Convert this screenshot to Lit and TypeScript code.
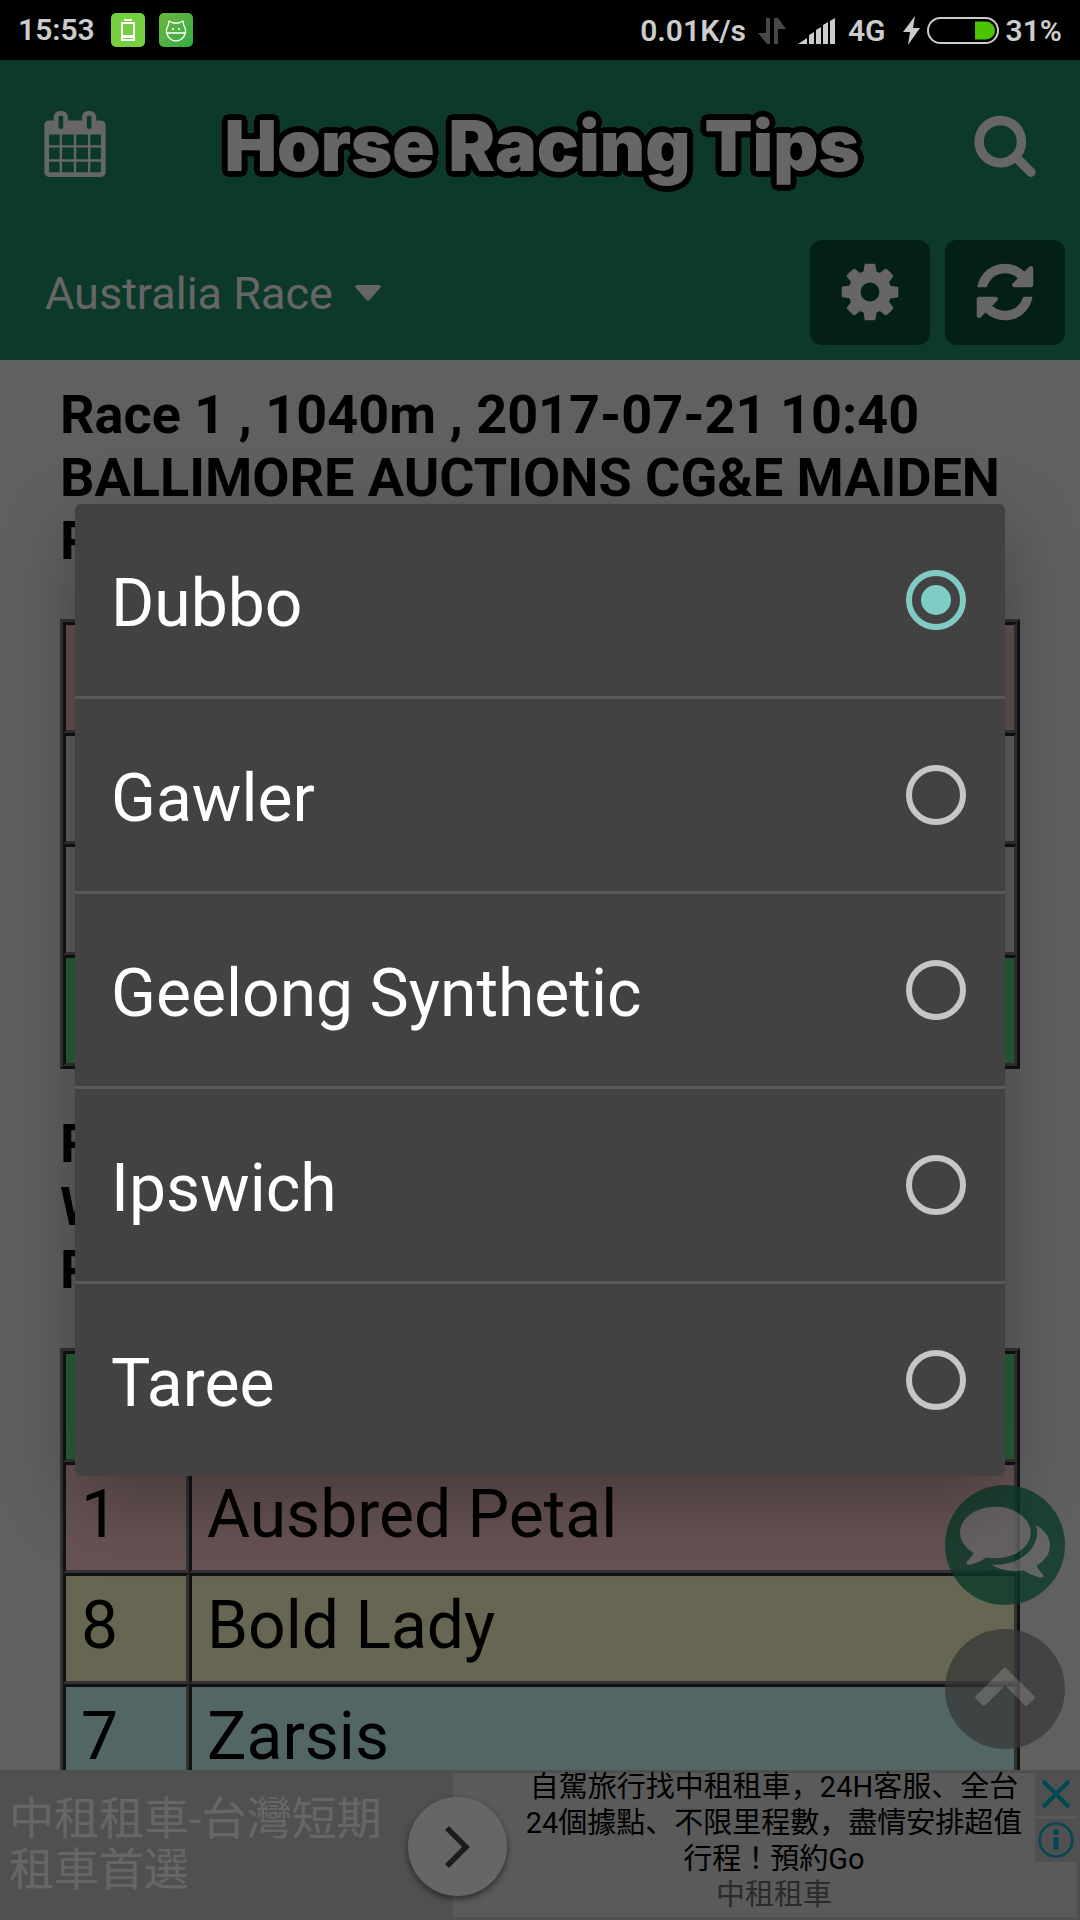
import { LitElement, html, svg, css } from "lit";
import { customElement, property, state } from "lit/decorators.js";

const ICONS = {
  calendar:
    "M192 1664h288v-288h-288v288zm352 0h320v-288h-320v288zm-352-352h288v-320h-288v320zm352 0h320v-320h-320v320zm-352-384h288v-288h-288v288zm736 736h320v-288h-320v288zm-384-736h320v-288h-320v288zm768 736h288v-288h-288v288zm-384-352h320v-320h-320v320zm-352-864v-288q0-13-9.5-22.5t-22.5-9.5h-64q-13 0-22.5 9.5t-9.5 22.5v288q0 13 9.5 22.5t22.5 9.5h64q13 0 22.5-9.5t9.5-22.5zm736 864h288v-320h-288v320zm-384-384h320v-288h-320v288zm384 0h288v-288h-288v288zm32-480v-288q0-13-9.5-22.5t-22.5-9.5h-64q-13 0-22.5 9.5t-9.5 22.5v288q0 13 9.5 22.5t22.5 9.5h64q13 0 22.5-9.5t9.5-22.5zm384-64v1280q0 52-38 90t-90 38h-1408q-52 0-90-38t-38-90v-1280q0-52 38-90t90-38h128v-96q0-66 47-113t113-47h64q66 0 113 47t47 113v96h384v-96q0-66 47-113t113-47h64q66 0 113 47t47 113v96h128q52 0 90 38t38 90z",
  search:
    "M1216 832q0-185-131.5-316.5t-316.5-131.5-316.5 131.5-131.5 316.5 131.5 316.5 316.5 131.5 316.5-131.5 131.5-316.5zm512 832q0 52-38 90t-90 38q-54 0-90-38l-343-342q-179 124-399 124-143 0-273.5-55.5t-225-150-150-225-55.5-273.5 55.5-273.5 150-225 225-150 273.5-55.5 273.5 55.5 225 150 150 225 55.5 273.5q0 220-124 399l343 343q37 37 37 90z",
  cog: "M1152 896q0-106-75-181t-181-75-181 75-75 181 75 181 181 75 181-75 75-181zm512-109v222q0 12-8 23t-20 13l-185 28q-19 54-39 91 35 50 107 138 10 12 10 25t-9 23q-27 37-99 108t-94 71q-12 0-26-9l-138-108q-44 23-91 38-16 136-29 186-7 28-36 28h-222q-14 0-24.5-8.5t-11.5-21.5l-28-184q-49-16-90-37l-141 107q-10 9-25 9-14 0-25-11-126-114-165-168-7-10-7-23 0-12 8-23 15-21 51-66.5t54-70.5q-27-50-41-99l-183-27q-13-2-21-12.5t-8-23.5v-222q0-12 8-23t19-13l186-28q14-46 39-92-40-57-107-138-10-12-10-24 0-10 9-23 26-36 98.5-107.5t94.5-71.5q13 0 26 10l138 107q44-23 91-38 16-136 29-186 7-28 36-28h222q14 0 24.5 8.5t11.5 21.5l28 184q49 16 90 37l142-107q9-9 24-9 13 0 25 10 129 119 165 170 7 8 7 22 0 12-8 23-15 21-51 66.5t-54 70.5q26 50 41 98l183 28q13 2 21 12.5t8 23.5z",
  refresh:
    "M1639 1056q0 5-1 7-64 268-268 434.5t-478 166.5q-146 0-282.5-55t-243.5-157l-129 129q-19 19-45 19t-45-19-19-45v-448q0-26 19-45t45-19h448q26 0 45 19t19 45-19 45l-137 137q71 66 161 102t187 36q134 0 250-65t186-179q11-17 53-117 8-23 30-23h192q13 0 22.5 9.5t9.5 22.5zm25-800v448q0 26-19 45t-45 19h-448q-26 0-45-19t-19-45 19-45l138-138q-148-137-349-137-134 0-250 65t-186 179q-11 17-53 117-8 23-30 23h-199q-13 0-22.5-9.5t-9.5-22.5v-7q65-268 270-434.5t480-166.5q146 0 284 55.5t245 156.5l130-129q19-19 45-19t45 19 19 45z",
  comments:
    "M1408 768q0 139-94 257t-256.5 186.5-353.5 68.5q-86 0-176-16-124 88-278 128-36 9-86 16h-3q-11 0-20.5-8t-11.5-21q-1-3-1-6.5t.5-6.5 2-6l2.5-5 3.5-5.5 4-5 4.5-5 4-4.5q5-6 23-25t26-29.5 22.5-29 25-38.5 20.5-44q-124-72-195-177t-71-224q0-139 94-257t256.5-186.5 353.5-68.5 353.5 68.5 256.5 186.5 94 257zm384 256q0 120-71 224.5t-195 176.5q10 24 20.5 44t25 38.5 22.5 29 26 29.5 23 25q1 1 4 4.5t4.5 5 4 5 3.5 5.5l2.5 5 2 6 .5 6.5-1 6.5q-3 14-13 22t-22 7q-50-7-86-16-154-40-278-128-90 16-176 16-271 0-472-132 58 4 88 4 161 0 309-45t264-129q125-92 192-212t67-254q0-77-23-152 129 71 204 178t75 230z",
  up: "M1683 1331l-166 165q-19 19-45 19t-45-19l-531-531-531 531q-19 19-45 19t-45-19l-166-165q-19-19-19-45.5t19-45.5l742-741q19-19 45-19t45 19l742 741q19 19 19 45.5t-19 45.5z",
};

type IconName = keyof typeof ICONS;

const icon = (name: IconName) => html`
  <svg class="icon" viewBox="0 0 1792 1792" fill="currentColor" aria-hidden="true">
    ${svg`<path d=${ICONS[name]}></path>`}
  </svg>
`;

@customElement("status-bar")
export class StatusBar extends LitElement {
  static styles = css`
    :host {
      display: flex;
      align-items: center;
      height: 60px;
      padding: 0 18px;
      box-sizing: border-box;
      background: #000;
      color: #ccc;
      font: 600 30px/36px Roboto, "Liberation Sans", sans-serif;
    }
    svg {
      display: block;
      flex: none;
    }
    .left,
    .right {
      display: flex;
      align-items: center;
    }
    .left {
      gap: 16px;
      flex: 1;
    }
    .apps {
      display: flex;
      gap: 14px;
    }
    .right {
      gap: 12px;
      padding-top: 1px;
    }
    .battery {
      display: flex;
      align-items: center;
      gap: 7px;
      padding-left: 5px;
    }
  `;

  render() {
    return html`
      <div class="left">
        <span>15:53</span>
        <span class="apps">
          <svg width="34" height="34" viewBox="0 0 34 34" aria-hidden="true">
            <rect width="34" height="34" rx="5" fill="#76cf3f"></rect>
            <path d="M13 6h8v2h-8z" fill="#fff"></path>
            <rect x="11" y="10" width="12" height="17" fill="none" stroke="#fff" stroke-width="2"></rect>
            <path d="M12 22h10v3h-10z" fill="#fff"></path>
          </svg>
          <svg width="34" height="34" viewBox="0 0 34 34" aria-hidden="true">
            <defs>
              <linearGradient id="g" x1="0" y1="0" x2="1" y2="1">
                <stop offset="0" stop-color="#6db53b"></stop>
                <stop offset="1" stop-color="#35ad48"></stop>
              </linearGradient>
            </defs>
            <rect width="34" height="34" rx="5" fill="url(#g)"></rect>
            <path
              d="M9 13l1-5 4 2h6l4-2 1 5c2 3 2 5 1 8-1 4-5 7-9 7s-8-3-9-7c-1-3-1-5 1-8zM8 20h18"
              fill="none"
              stroke="#fff"
              stroke-width="1.3"
              stroke-linejoin="round"
            ></path>
            <circle cx="14" cy="16" r="1.1" fill="#fff"></circle>
            <circle cx="20" cy="16" r="1.1" fill="#fff"></circle>
          </svg>
        </span>
      </div>
      <div class="right">
        <span>0.01K/s</span>
        <svg width="28" height="28" viewBox="0 0 28 28" fill="#484848" aria-hidden="true">
          <path d="M8 1h4v26h-3l-9-11h8zM16 27V1h4l8 11h-8v15z"></path>
        </svg>
        <svg width="38" height="26" viewBox="0 0 38 26" fill="#ccc" aria-hidden="true">
          <path d="M0 26l9-6v6zM11 26v-9l5-3v12zM18 26v-14l5-3v17zM25 26V7l5-3v22zM32 26V3l5-3v26z"></path>
        </svg>
        <span>4G</span>
        <span class="battery">
          <svg width="17" height="29" viewBox="0 0 17 29" fill="#ccc" aria-hidden="true">
            <path d="M12 0L0 16h7L5 29l12-17h-7z"></path>
          </svg>
          <svg width="72" height="27" viewBox="0 0 72 27" aria-hidden="true">
            <rect x="1" y="1" width="70" height="25" rx="12.5" fill="none" stroke="#ccc" stroke-width="2"></rect>
            <path d="M48 4.500h11a9 9 0 0 1 0 18h-11z" fill="#4cc402"></path>
          </svg>
          <span>31%</span>
        </span>
      </div>
    `;
  }
}

@customElement("race-header")
export class RaceHeader extends LitElement {
  static styles = css`
    :host {
      display: block;
      background: #1e8f69;
      color: #fff;
      font-family: Roboto, "Liberation Sans", sans-serif;
    }
    .top {
      display: flex;
      align-items: center;
      justify-content: space-between;
      height: 168px;
      padding: 0 42px;
    }
    .logo {
      margin: 0;
      padding: 3px 0 0 4px;
      font: 900 70px/84px Inter, Lato, sans-serif;
      -webkit-text-stroke: 5px #fff;
      paint-order: stroke fill;
      stroke-linejoin: round;
      text-shadow:
        6px 0 #000,
        -6px 0 #000,
        0 6px #000,
        0 -6px #000,
        4px 4px #000,
        -4px 4px #000,
        4px -4px #000,
        -4px -4px #000,
        5px 3px #000,
        -5px 3px #000,
        5px -3px #000,
        -5px -3px #000,
        3px 5px #000,
        -3px 5px #000,
        3px -5px #000,
        -3px -5px #000;
    }
    button {
      display: grid;
      place-items: center;
      padding: 0;
      border: 0;
      background: none;
      color: inherit;
    }
    .icon {
      display: block;
      width: 66px;
      height: 66px;
    }
    .bar {
      display: flex;
      align-items: center;
      gap: 15px;
      padding: 12px 15px 15px 45px;
    }
    .country {
      display: flex;
      align-items: center;
      gap: 22px;
      flex: 1;
    }
    select {
      appearance: none;
      margin: 0;
      padding: 2px 0 0;
      border: 0;
      background: none;
      color: inherit;
      font: 400 45px/54px Roboto, "Liberation Sans", sans-serif;
    }
    .square {
      width: 120px;
      height: 105px;
      padding-bottom: 2px;
      border-radius: 12px;
      background: #084e37;
    }
  `;

  render() {
    return html`
      <div class="top">
        <button aria-label="Calendar">${icon("calendar")}</button>
        <h1 class="logo">Horse Racing Tips</h1>
        <button aria-label="Search">${icon("search")}</button>
      </div>
      <div class="bar">
        <div class="country">
          <select aria-label="Country">
            <option>Australia Race</option>
          </select>
          <svg width="26" height="16" viewBox="0 0 26 16" fill="#fff" aria-hidden="true">
            <path d="M2 0h22q3 1 1 3L14.500 15q-1.500 1.500-3 0L1 3q-2-2 1-3z"></path>
          </svg>
        </div>
        <button class="square" aria-label="Settings">${icon("cog")}</button>
        <button class="square" aria-label="Refresh">${icon("refresh")}</button>
      </div>
    `;
  }
}

type Tone = "pink" | "yellow" | "cyan" | "green" | "plain";
interface Row {
  no?: string;
  name?: string;
  tone: Tone;
}

@customElement("race-card")
export class RaceCard extends LitElement {
  @property({ attribute: false }) lines: string[] = [];
  @property({ attribute: false }) rows: Row[] = [];

  static styles = css`
    :host {
      display: block;
      color: #000;
      font-family: Roboto, "Liberation Sans", sans-serif;
    }
    h2 {
      margin: 0 0 47px;
      font-size: 54px;
      line-height: 63px;
      font-weight: 700;
      white-space: nowrap;
    }
    .line {
      display: block;
    }
    table {
      width: 100%;
      border: 3px outset gray;
      border-spacing: 0;
      font-size: 66px;
      line-height: 75px;
    }
    td {
      height: 75px;
      padding: 12px 15px 18px;
      border: 3px inset gray;
    }
    .no {
      width: 90px;
    }
    .pink {
      background: #fcc;
    }
    .yellow {
      background: #ffc;
    }
    .cyan {
      background: #cff;
    }
    .green {
      background: #64f08c;
    }
  `;

  render() {
    return html`
      <h2>${this.lines.map((line) => html`<span class="line">${line}</span>`)}</h2>
      <table>
        <tbody>
          ${this.rows.map(
            (row) => html`<tr class=${row.tone}>
              <td class="no">${row.no}</td>
              <td>${row.name}</td>
            </tr>`,
          )}
        </tbody>
      </table>
    `;
  }
}

@customElement("ad-banner")
export class AdBanner extends LitElement {
  static styles = css`
    :host {
      display: grid;
      grid-template-columns: minmax(0, 453fr) minmax(0, 624fr);
      position: relative;
      height: 150px;
      padding: 3px 3px 3px 0;
      box-sizing: border-box;
      background: #c8c8c8;
      font-family: Roboto, "Noto Sans CJK JP", sans-serif;
      font-weight: 400;
    }
    .title {
      padding: 21px 60px 0 9px;
      color: #fff;
      font-size: 45px;
      line-height: 51px;
      text-decoration: none;
    }
    .copy {
      display: flex;
      background: #e1e1e1;
    }
    .text {
      flex: 1;
      margin: -4px 0 0;
      padding-left: 60px;
      color: #000;
      font-size: 29px;
      line-height: 36px;
      text-align: center;
      white-space: nowrap;
    }
    .line {
      display: block;
    }
    .brand {
      color: #6c6c6c;
    }
    .marks {
      display: flex;
      flex-direction: column;
      gap: 3px;
      width: 42px;
    }
    .marks button {
      display: grid;
      place-items: center;
      height: 43px;
      padding: 0 0 2px;
      border: 0;
      background: #c8c8c8;
      color: #00b4d2;
    }
    .go {
      position: absolute;
      top: 27px;
      left: calc(42% - 46px);
      display: grid;
      place-items: center;
      width: 99px;
      height: 99px;
      padding: 0;
      border: 0;
      border-radius: 50%;
      background: #fff;
      box-shadow: 0 3px 6px rgba(0, 0, 0, 0.5);
    }
    svg {
      display: block;
    }
  `;

  render() {
    return html`
      <a class="title" href="#ad">中租租車-台灣短期租車首選</a>
      <div class="copy">
        <p class="text">
          <span class="line">自駕旅行找中租租車，24H客服、全台</span>
          <span class="line">24個據點、不限里程數，盡情安排超值</span>
          <span class="line">行程！預約Go</span>
          <span class="line brand">中租租車</span>
        </p>
        <div class="marks">
          <button aria-label="Close ad">
            <svg width="30" height="30" viewBox="0 0 30 30" fill="none" stroke="currentColor" stroke-width="4">
              <path d="M2 2l26 26M28 2L2 28"></path>
            </svg>
          </button>
          <button aria-label="About this ad">
            <svg width="36" height="36" viewBox="0 0 36 36" fill="currentColor">
              <circle cx="18" cy="18" r="16.500" fill="none" stroke="currentColor" stroke-width="2.500"></circle>
              <circle cx="18" cy="10" r="3"></circle>
              <path d="M15.500 15h5v13h-5z"></path>
            </svg>
          </button>
        </div>
      </div>
      <button class="go" aria-label="Open">
        <svg width="28" height="42" viewBox="0 0 28 42" fill="none" stroke="#464646" stroke-width="5.500">
          <path d="M4 2l19 19L4 40"></path>
        </svg>
      </button>
    `;
  }
}

@customElement("venue-dialog")
export class VenueDialog extends LitElement {
  @property({ attribute: false }) venues: string[] = [];
  @state() private selected = "Dubbo";

  static styles = css`
    :host {
      display: block;
      border-radius: 6px;
      background: #424242;
      box-shadow: 0 24px 76px rgba(0, 0, 0, 0.3);
      color: #fff;
      font: 400 66px/78px Roboto, "Liberation Sans", sans-serif;
    }
    .option {
      display: flex;
      align-items: center;
      height: 192px;
      padding: 0 39px 0 36px;
    }
    .option + .option {
      border-top: 3px solid #595959;
    }
    .name {
      flex: 1;
      padding-top: 8px;
    }
    input {
      appearance: none;
      flex: none;
      display: grid;
      place-items: center;
      box-sizing: border-box;
      width: 60px;
      height: 60px;
      margin: 0;
      border: 6px solid #c6c6c6;
      border-radius: 50%;
    }
    input:checked {
      border-color: #80cbc4;
    }
    input:checked::before {
      content: "";
      width: 30px;
      height: 30px;
      border-radius: 50%;
      background: #80cbc4;
    }
  `;

  render() {
    return html`${this.venues.map(
      (venue) => html`
        <label class="option">
          <span class="name">${venue}</span>
          <input
            type="radio"
            name="venue"
            .checked=${venue === this.selected}
            @change=${() => (this.selected = venue)}
          />
        </label>
      `,
    )}`;
  }
}

@customElement("app-root")
export class AppRoot extends LitElement {
  static styles = css`
    :host {
      display: flex;
      flex-direction: column;
      height: 100vh;
    }
    .screen {
      position: relative;
      display: flex;
      flex-direction: column;
      flex: 1;
      min-height: 0;
    }
    .body {
      position: relative;
      flex: 1;
      min-height: 0;
      overflow: hidden;
      background: #f1f1f1;
    }
    .cards {
      display: flex;
      flex-direction: column;
      gap: 43px;
      padding: 23px 60px 0;
    }
    .floating {
      position: absolute;
      right: 15px;
      bottom: 21px;
      display: flex;
      flex-direction: column;
      gap: 24px;
    }
    .round {
      display: grid;
      place-items: center;
      width: 120px;
      height: 120px;
      padding: 0 0 12px;
      border: 0;
      border-radius: 50%;
      color: #fff;
    }
    .round .icon {
      display: block;
      width: 66px;
      height: 66px;
    }
    .chat {
      background: #1e8f69;
      opacity: 0.8;
    }
    .chat .icon {
      width: 90px;
      height: 90px;
    }
    .to-top {
      background: #888;
      opacity: 0.7;
    }
    .scrim {
      position: absolute;
      inset: 0;
      display: grid;
      align-items: center;
      padding: 0 75px;
      background: rgba(0, 0, 0, 0.6);
    }
  `;

  render() {
    return html`
      <status-bar></status-bar>
      <div class="screen">
        <race-header></race-header>
        <main class="body">
          <div class="cards">
            <race-card
              .lines=${["Race 1 , 1040m , 2017-07-21 10:40", "BALLIMORE AUCTIONS CG&E MAIDEN", "PLATE"]}
              .rows=${[{ tone: "pink" }, { tone: "plain" }, { tone: "plain" }, { tone: "green" }]}
            ></race-card>
            <race-card
              .lines=${["Race 2", "W", "PLATE"]}
              .rows=${[
                { tone: "green" },
                { tone: "pink", no: "1", name: "Ausbred Petal" },
                { tone: "yellow", no: "8", name: "Bold Lady" },
                { tone: "cyan", no: "7", name: "Zarsis" },
              ]}
            ></race-card>
          </div>
          <div class="floating">
            <button class="round chat" aria-label="Chat">${icon("comments")}</button>
            <button class="round to-top" aria-label="Back to top">${icon("up")}</button>
          </div>
        </main>
        <ad-banner></ad-banner>
        <div class="scrim">
          <venue-dialog
            role="dialog"
            aria-label="Venue"
            .venues=${["Dubbo", "Gawler", "Geelong Synthetic", "Ipswich", "Taree"]}
          ></venue-dialog>
        </div>
      </div>
    `;
  }
}
